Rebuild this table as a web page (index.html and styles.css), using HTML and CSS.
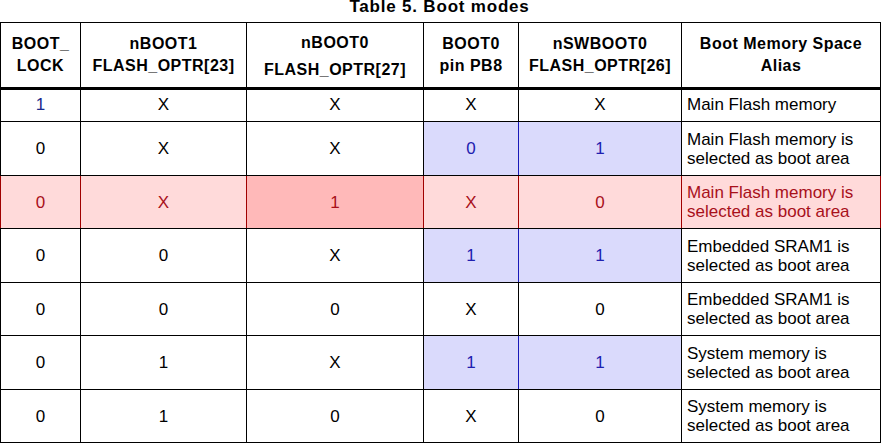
FILE: index.html
```html
<!DOCTYPE html>
<html lang="en">
<head>
<meta charset="utf-8">
<title>Table 5. Boot modes</title>
<link rel="stylesheet" href="styles.css">
</head>
<body>
<div class="title">Table 5. Boot modes</div>
<table class="boot">
  <colgroup>
    <col class="c1"><col class="c2"><col class="c3"><col class="c4"><col class="c5"><col class="c6">
  </colgroup>
  <thead>
    <tr>
      <th>BOOT_<br>LOCK</th>
      <th>nBOOT1<br>FLASH_OPTR[23]</th>
      <th class="wide">nBOOT0<br>FLASH_OPTR[27]</th>
      <th>BOOT0<br>pin PB8</th>
      <th>nSWBOOT0<br>FLASH_OPTR[26]</th>
      <th>Boot Memory Space<br>Alias</th>
    </tr>
  </thead>
  <tbody>
    <tr class="short">
      <td class="navy">1</td><td>X</td><td>X</td><td>X</td><td>X</td>
      <td class="alias">Main Flash memory</td>
    </tr>
    <tr class="odd">
      <td>0</td><td>X</td><td>X</td><td class="blue split">0</td><td class="blue">1</td>
      <td class="alias">Main Flash memory is<br>selected as boot area</td>
    </tr>
    <tr class="even pink">
      <td class="first">0</td><td>X</td><td class="strong">1</td><td>X</td><td>0</td>
      <td class="alias">Main Flash memory is<br>selected as boot area</td>
    </tr>
    <tr class="odd">
      <td>0</td><td>0</td><td>X</td><td class="blue split">1</td><td class="blue">1</td>
      <td class="alias">Embedded SRAM1 is<br>selected as boot area</td>
    </tr>
    <tr class="even">
      <td>0</td><td>0</td><td>0</td><td>X</td><td>0</td>
      <td class="alias">Embedded SRAM1 is<br>selected as boot area</td>
    </tr>
    <tr class="odd">
      <td>0</td><td>1</td><td>X</td><td class="blue split">1</td><td class="blue">1</td>
      <td class="alias">System memory is<br>selected as boot area</td>
    </tr>
    <tr class="even">
      <td>0</td><td>1</td><td>0</td><td>X</td><td>0</td>
      <td class="alias">System memory is<br>selected as boot area</td>
    </tr>
  </tbody>
</table>
</body>
</html>
```
FILE: styles.css
```css
html, body {
  margin: 0;
  padding: 0;
  background: #ffffff;
}

body {
  font-family: "Liberation Sans", Arial, sans-serif;
  color: #000000;
  width: 882px;
  height: 444px;
  overflow: hidden;
}

.title {
  margin-top: -4px;
  margin-bottom: 4px;
  text-align: center;
  font-weight: bold;
  font-size: 17px;
  letter-spacing: 0.8px;
  line-height: 22px;
  padding-right: 3px;
}

.boot {
  border-collapse: collapse;
  table-layout: fixed;
  width: 881px;
}

.c1 { width: 80px; }
.c2 { width: 166px; }
.c3 { width: 177px; }
.c4 { width: 95px; }
.c5 { width: 163px; }
.c6 { width: 199px; }

.boot th,
.boot td {
  border: 1px solid #000000;
  padding: 0;
  text-align: center;
  vertical-align: middle;
  white-space: nowrap;
}

.boot th {
  height: 64px;
  border-bottom: 3px solid #000000;
  font-size: 16px;
  letter-spacing: 0.5px;
  line-height: 22px;
  font-weight: bold;
}

.boot th.wide {
  line-height: 27px;
  padding-top: 2px;
  height: 62px;
}

.boot td {
  font-size: 17px;
  line-height: 19px;
}

.boot .short td {
  height: 29px;
  padding-bottom: 2px;
}

.boot .odd td { height: 53px; }
.boot .even td { height: 52px; }

.boot td.alias {
  text-align: left;
  padding-left: 5px;
}

.navy { color: #1a2a8c; }

.boot td.blue {
  background: #dadafc;
  color: #2020b0;
}

.boot td.split {
  border-right-color: #1818b8;
}

.boot .pink td {
  background: #ffdada;
  color: #a8101a;
  border-right-color: #a00000;
}

.boot .pink td.first {
  border-left-color: #a00000;
}

.boot .pink td.strong {
  background: #ffb9b9;
}
```
